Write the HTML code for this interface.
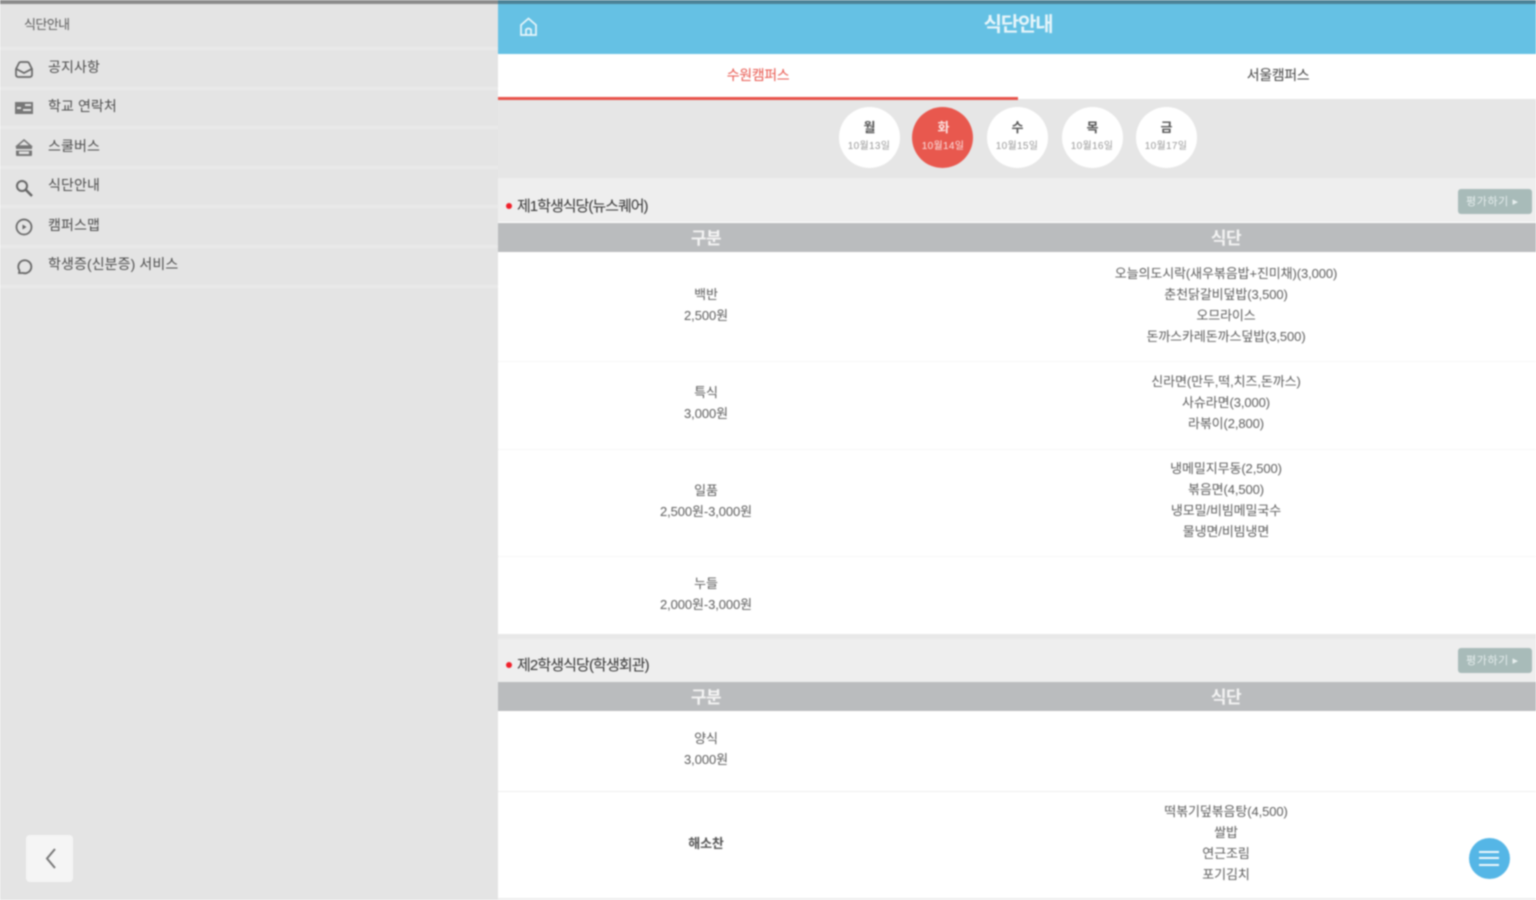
<!DOCTYPE html>
<html lang="ko">
<head>
<meta charset="utf-8">
<title>식단안내</title>
<style>
html,body{margin:0;padding:0;width:1536px;height:900px;overflow:hidden;background:#fff}
#r{position:relative;width:1536px;height:900px;overflow:hidden;filter:blur(.9px);font-family:"Liberation Sans","Noto Sans CJK KR",sans-serif;color:#555}
#r div{position:absolute}
.t{white-space:nowrap;line-height:1;letter-spacing:-1px}
.c{transform:translateX(-50%);text-align:center}
.m{font-size:13px;color:#5c5c5c;letter-spacing:-.1px}
.th{font-size:17px;color:#f4f4f4;letter-spacing:-.5px;font-weight:bold}
.n{font-size:14px;color:#4c4c4c;left:48px;letter-spacing:.1px}
.line{left:0;width:498px;height:3px;background:#e9e9e9}
.d{width:61px;height:61px;border-radius:50%;background:#fff;top:107px}
.wd{font-size:13px;color:#555;font-weight:bold;top:121px}
.dt{font-size:10px;color:#999;top:142px;letter-spacing:.3px}
.btn{left:1458px;width:74px;height:25px;background:#a8bbb9;border-radius:3px}
.rl{left:498px;width:1038px;height:1px;background:#f7f7f7}
svg{position:absolute;overflow:visible}
</style>
</head>
<body>
<div id="r">
  <!-- sidebar -->
  <div style="left:0;top:0;width:498px;height:900px;background:#e4e4e4"></div>
  <div style="left:0;top:0;width:498px;height:4px;background:#8b8b8b"></div>
  <div class="t" style="left:24px;top:18px;font-size:13px;color:#5c5c5c;letter-spacing:-.6px">식단안내</div>
  <div class="line" style="top:47px"></div>
  <div class="line" style="top:87px"></div>
  <div class="line" style="top:126px"></div>
  <div class="line" style="top:166px"></div>
  <div class="line" style="top:205px"></div>
  <div class="line" style="top:245px"></div>
  <div class="line" style="top:285px"></div>

  <div class="t n" style="top:60px">공지사항</div>
  <div class="t n" style="top:99px">학교 연락처</div>
  <div class="t n" style="top:139px">스쿨버스</div>
  <div class="t n" style="top:178px">식단안내</div>
  <div class="t n" style="top:218px">캠퍼스맵</div>
  <div class="t n" style="top:257px">학생증(신분증) 서비스</div>

  <svg style="left:14px;top:59px" width="20" height="20" viewBox="0 0 20 20" fill="none" stroke="#666" stroke-width="1.7"><path d="M2 10V15.5Q2 18 4.5 18H15.5Q18 18 18 15.5V10L15 4Q14.500 3 13 3H7Q5.500 3 5 4Z"/><path d="M2.500 10 10 14 17.500 10"/></svg>
  <svg style="left:15px;top:102px" width="18" height="13" viewBox="0 0 18 13"><rect width="18" height="12" fill="#777"/><rect x="2" y="5" width="4" height="2" fill="#e4e4e4"/><rect x="10" y="2" width="6" height="2" fill="#e4e4e4"/><rect x="8" y="7" width="8" height="2" fill="#e4e4e4"/></svg>
  <svg style="left:15px;top:139px" width="18" height="18" viewBox="0 0 18 18" fill="#777"><path d="M9 1 16 7H2Z" fill="none" stroke="#777" stroke-width="1.500"/><rect x="1" y="7" width="16" height="10" rx="1"/><rect x="1" y="10" width="16" height="1.500" fill="#e4e4e4"/><rect x="4" y="12.500" width="10" height="2.500" fill="#e4e4e4"/></svg>
  <svg style="left:15px;top:179px" width="18" height="18" viewBox="0 0 18 18" fill="none" stroke="#666"><circle cx="7" cy="7" r="5" stroke-width="2"/><path d="M11 11 17 17" stroke-width="2.500"/></svg>
  <svg style="left:15px;top:218px" width="18" height="18" viewBox="0 0 18 18" fill="none" stroke="#666" stroke-width="1.700"><circle cx="9" cy="9" r="7.500"/><path d="M7.500 6.500 11.500 9 7.500 11.500Z" fill="#666" stroke="none"/></svg>
  <svg style="left:15px;top:258px" width="18" height="18" viewBox="0 0 18 18" fill="none" stroke="#666" stroke-width="1.800"><path d="M4 15 4.500 12.500A6.500 6.500 0 1 1 8 15Z"/></svg>

  <div style="left:26px;top:835px;width:47px;height:47px;border-radius:4px;background:#f5f5f5"></div>
  <svg style="left:44px;top:847px" width="13" height="23" viewBox="0 0 13 23" fill="none" stroke="#777" stroke-width="2"><path d="M11 2 3 11.500 11 21"/></svg>

  <!-- header -->
  <div style="left:498px;top:0;width:1038px;height:4px;background:#4b8296"></div>
  <div style="left:498px;top:4px;width:1038px;height:50px;background:#65c1e4"></div>
  <svg style="left:519px;top:17px" width="19" height="20" viewBox="0 0 19 20" fill="none" stroke="#e9f6fb" stroke-width="1.700"><path d="M2 18V8L9.500 1.500 17 8V18Z"/><path d="M7 18V12.500Q9.500 10.500 12 12.500V18"/></svg>
  <div class="t c" style="left:1018px;top:15px;font-size:20px;color:#e6f5fa;font-weight:bold;letter-spacing:-1.200px">식단안내</div>

  <!-- tabs -->
  <div class="t c" style="left:758px;top:68px;font-size:14px;color:#e8574e;letter-spacing:-.4px">수원캠퍼스</div>
  <div class="t c" style="left:1278px;top:68px;font-size:14px;color:#444;letter-spacing:-.4px">서울캠퍼스</div>
  <div style="left:498px;top:97px;width:520px;height:3px;background:#e8524a"></div>

  <!-- days -->
  <div style="left:498px;top:99px;width:1038px;height:79px;background:#e6e6e6;z-index:-1"></div>
  <div class="d" style="left:839px"></div>
  <div class="d" style="left:912px;background:#e8584e"></div>
  <div class="d" style="left:987px"></div>
  <div class="d" style="left:1062px"></div>
  <div class="d" style="left:1136px"></div>
  <div class="t c wd" style="left:869px">월</div><div class="t c dt" style="left:869px">10월13일</div>
  <div class="t c wd" style="left:943px;color:#fbe3e1">화</div><div class="t c dt" style="left:943px;color:#fbe3e1">10월14일</div>
  <div class="t c wd" style="left:1017px">수</div><div class="t c dt" style="left:1017px">10월15일</div>
  <div class="t c wd" style="left:1092px">목</div><div class="t c dt" style="left:1092px">10월16일</div>
  <div class="t c wd" style="left:1166px">금</div><div class="t c dt" style="left:1166px">10월17일</div>

  <!-- section 1 -->
  <div style="left:498px;top:178px;width:1038px;height:44px;background:#eeeeee"></div>
  <div style="left:506px;top:203px;width:6px;height:6px;border-radius:50%;background:#f0202a"></div>
  <div class="t" style="left:517px;top:199px;font-size:15px;color:#333;letter-spacing:-1px">제1학생식당(뉴스퀘어)</div>
  <div class="btn" style="top:189px"></div>
  <div class="t" style="left:1466px;top:197px;font-size:11px;color:#e6eeee;letter-spacing:.6px">평가하기 ▸</div>
  <div style="left:498px;top:223px;width:1038px;height:29px;background:#babcbe"></div>
  <div class="t c th" style="left:706px;top:230px">구분</div>
  <div class="t c th" style="left:1226px;top:230px">식단</div>

  <div class="t c m" style="left:706px;top:288px">백반</div>
  <div class="t c m" style="left:706px;top:309px">2,500원</div>
  <div class="t c m" style="left:1226px;top:267px">오늘의도시락(새우볶음밥+진미채)(3,000)</div>
  <div class="t c m" style="left:1226px;top:288px">춘천닭갈비덮밥(3,500)</div>
  <div class="t c m" style="left:1226px;top:309px">오므라이스</div>
  <div class="t c m" style="left:1226px;top:330px">돈까스카레돈까스덮밥(3,500)</div>
  <div class="rl" style="top:361px"></div>

  <div class="t c m" style="left:706px;top:386px">특식</div>
  <div class="t c m" style="left:706px;top:407px">3,000원</div>
  <div class="t c m" style="left:1226px;top:375px">신라면(만두,떡,치즈,돈까스)</div>
  <div class="t c m" style="left:1226px;top:396px">사슈라면(3,000)</div>
  <div class="t c m" style="left:1226px;top:417px">라볶이(2,800)</div>
  <div class="rl" style="top:449px"></div>

  <div class="t c m" style="left:706px;top:484px">일품</div>
  <div class="t c m" style="left:706px;top:505px">2,500원-3,000원</div>
  <div class="t c m" style="left:1226px;top:462px">냉메밀지무동(2,500)</div>
  <div class="t c m" style="left:1226px;top:483px">볶음면(4,500)</div>
  <div class="t c m" style="left:1226px;top:504px">냉모밀/비빔메밀국수</div>
  <div class="t c m" style="left:1226px;top:525px">물냉면/비빔냉면</div>
  <div class="rl" style="top:556px"></div>

  <div class="t c m" style="left:706px;top:577px">누들</div>
  <div class="t c m" style="left:706px;top:598px">2,000원-3,000원</div>

  <!-- section 2 -->
  <div style="left:498px;top:634px;width:1038px;height:48px;background:#eeeeee"></div>
  <div style="left:498px;top:634px;width:1038px;height:5px;background:#e8e8e8"></div>
  <div style="left:506px;top:662px;width:6px;height:6px;border-radius:50%;background:#f0202a"></div>
  <div class="t" style="left:517px;top:658px;font-size:15px;color:#333;letter-spacing:-.9px">제2학생식당(학생회관)</div>
  <div class="btn" style="top:648px"></div>
  <div class="t" style="left:1466px;top:656px;font-size:11px;color:#e6eeee;letter-spacing:.6px">평가하기 ▸</div>
  <div style="left:498px;top:682px;width:1038px;height:29px;background:#babcbe"></div>
  <div class="t c th" style="left:706px;top:689px">구분</div>
  <div class="t c th" style="left:1226px;top:689px">식단</div>

  <div class="t c m" style="left:706px;top:732px">양식</div>
  <div class="t c m" style="left:706px;top:753px">3,000원</div>
  <div class="rl" style="top:791px;background:#efefef"></div>

  <div class="t c m" style="left:706px;top:837px;font-weight:bold;color:#555">해소찬</div>
  <div class="t c m" style="left:1226px;top:805px">떡볶기덮볶음탕(4,500)</div>
  <div class="t c m" style="left:1226px;top:826px">쌀밥</div>
  <div class="t c m" style="left:1226px;top:847px">연근조림</div>
  <div class="t c m" style="left:1226px;top:868px">포기김치</div>
  <div style="left:498px;top:898px;width:1038px;height:2px;background:#eeeeee"></div>

  <!-- fab -->
  <div style="left:1469px;top:838px;width:41px;height:41px;border-radius:50%;background:#55b6e6"></div>
  <div style="left:1479px;top:851px;width:20px;height:2px;background:#eef8fc"></div>
  <div style="left:1479px;top:857px;width:20px;height:2px;background:#eef8fc"></div>
  <div style="left:1479px;top:864px;width:20px;height:2px;background:#eef8fc"></div>
</div>
</body>
</html>
